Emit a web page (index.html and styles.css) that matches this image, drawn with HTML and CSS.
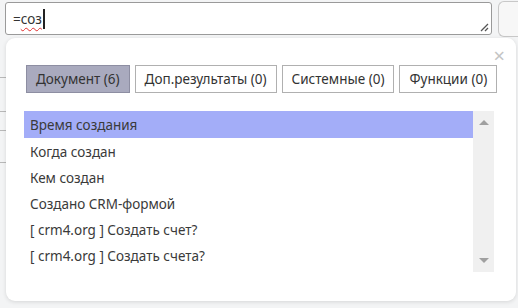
FILE: index.html
```html
<!DOCTYPE html>
<html lang="ru">
<head>
  <meta charset="UTF-8" />
  <title>Поиск полей</title>
  <link rel="stylesheet" href="styles.css">
</head>
<body>
<div class="page">
  <div class="side-lines">
    <span></span><span></span><span></span><span></span>
  </div>

  <div class="editor-row">
    <div class="formula">
      <span class="eq">=</span><span class="typo">соз</span><span class="caret"></span>
      <svg class="grip" width="12" height="12" viewBox="0 0 12 12">
        <path d="M11 4 L4 11 M11 8 L8 11" stroke="#555" stroke-width="1.3" fill="none"/>
      </svg>
    </div>
    <div class="next-box"></div>
  </div>

  <div class="popup">
    <span class="close">×</span>

    <div class="tabs">
      <button class="tab active">Документ (6)</button>
      <button class="tab">Доп.результаты (0)</button>
      <button class="tab">Системные (0)</button>
      <button class="tab">Функции (0)</button>
    </div>

    <div class="list">
      <div class="items">
        <div class="item selected">Время создания</div>
        <div class="item">Когда создан</div>
        <div class="item">Кем создан</div>
        <div class="item">Создано CRM-формой</div>
        <div class="item">[ crm4.org ] Создать счет?</div>
        <div class="item">[ crm4.org ] Создать счета?</div>
      </div>
      <div class="scrollbar">
        <span class="arrow up"></span>
        <span class="arrow down"></span>
      </div>
    </div>
  </div>
</div>
</body>
</html>
```

FILE: styles.css
```css
* { box-sizing: border-box; margin: 0; padding: 0; }

body {
  font-family: "Noto Sans", "Open Sans", sans-serif;
  background: #f3f4f5;
  color: #333;
  width: 518px;
  height: 308px;
  overflow: hidden;
}

.page {
  position: relative;
  height: 308px;
  padding: 2px 0 0 5px;
}

.side-lines span {
  position: absolute;
  left: 0;
  width: 6px;
  height: 1px;
  background: #b8b8b8;
}
.side-lines span:nth-child(1) { top: 77px; }
.side-lines span:nth-child(2) { top: 111px; }
.side-lines span:nth-child(3) { top: 130px; }
.side-lines span:nth-child(4) { top: 162px; }

.editor-row {
  display: flex;
  gap: 6px;
}

.formula {
  position: relative;
  width: 500px;
  height: 33px;
  background: #fff;
  border: 1px solid #9a9a9a;
  border-radius: 3px;
  padding: 6px 0 0 7px;
  font-size: 13.5px;
  line-height: 20px;
  color: #333;
  display: flex;
  align-items: flex-start;
}
.typo {
  text-decoration: underline wavy #e03030;
  text-decoration-thickness: 1px;
  text-underline-offset: 3px;
}
.caret {
  display: inline-block;
  width: 2px;
  height: 20px;
  background: #222;
  margin-left: 1px;
}
.grip {
  position: absolute;
  right: 2px;
  bottom: 2px;
}

.next-box {
  width: 20px;
  height: 36px;
  border: 1px solid #c8c8c8;
  border-right: none;
  border-radius: 6px 0 0 6px;
  background: #f7f7f7;
  margin-top: -1px;
}

.popup {
  position: absolute;
  left: 6px;
  top: 38px;
  width: 510px;
  height: 263px;
  background: #fff;
  border-radius: 9px;
  box-shadow: 0 1px 4px rgba(0, 0, 0, 0.12);
  padding: 27px 0 0 18px;
}

.close {
  position: absolute;
  right: 11px;
  top: 8px;
  font-size: 20px;
  line-height: 20px;
  color: #c4c4c4;
}

.tabs {
  display: flex;
  gap: 5px;
  padding-left: 2px;
  margin-bottom: 18px;
}
.tab {
  height: 28px;
  padding: 0 9px;
  font-family: inherit;
  font-size: 13.5px;
  color: #333;
  background: #fff;
  border: 1px solid #b0b0b0;
}
.tab.active {
  background: #a9aabe;
  border-color: #8d8ea2;
}

.list {
  display: flex;
  width: 470px;
  height: 161px;
}
.items {
  flex: 1;
}
.item {
  height: 26px;
  line-height: 26px;
  padding: 1px 0 0 6px;
  font-size: 13.5px;
  color: #3a3a3a;
  white-space: nowrap;
}
.item.selected {
  background: #a3adf8;
  height: 27px;
}

.scrollbar {
  position: relative;
  width: 21px;
  background: #f0f0f0;
}
.arrow {
  position: absolute;
  left: 6px;
  width: 0;
  height: 0;
  border-left: 5px solid transparent;
  border-right: 5px solid transparent;
}
.arrow.up {
  top: 9px;
  border-bottom: 5px solid #a0a0a0;
}
.arrow.down {
  bottom: 9px;
  border-top: 5px solid #a0a0a0;
}
```
